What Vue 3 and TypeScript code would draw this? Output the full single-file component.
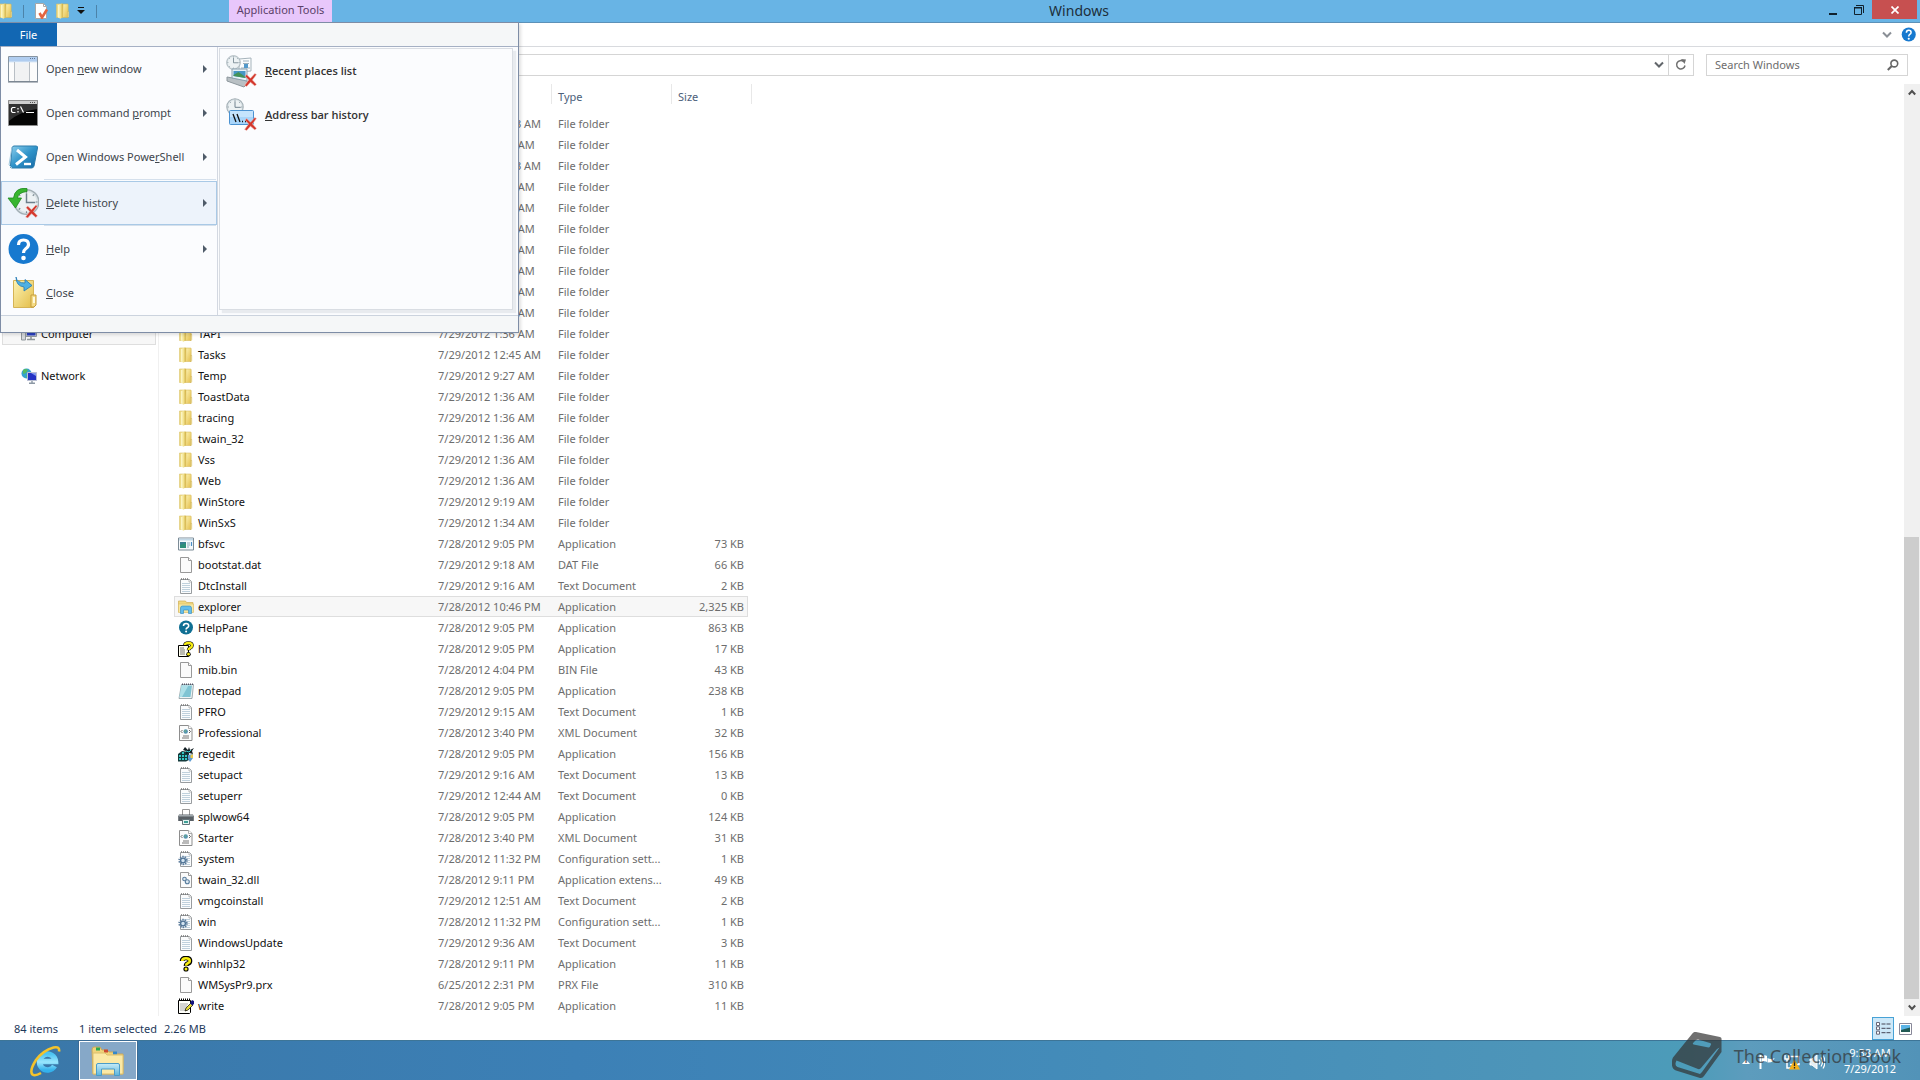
<script setup lang="ts">
import { ref } from 'vue'

interface FileRow {
  name: string
  date: string
  type: string
  size: string
  icon: string
}

function folder(name: string, date: string): FileRow {
  return { name, date, type: 'File folder', size: '', icon: 'folder' }
}

function file(name: string, date: string, type: string, size: string, icon: string): FileRow {
  return { name, date, type, size: size + ' KB', icon }
}

const rows: FileRow[] = [
  folder('', '7/29/2012 12:43 AM'),
  folder('', '7/29/2012 1:36 AM'),
  folder('', '7/29/2012 12:43 AM'),
  folder('', '7/29/2012 1:36 AM'),
  folder('', '7/29/2012 1:36 AM'),
  folder('', '7/29/2012 1:36 AM'),
  folder('', '7/29/2012 1:36 AM'),
  folder('', '7/29/2012 1:36 AM'),
  folder('', '7/29/2012 1:36 AM'),
  folder('', '7/29/2012 1:36 AM'),
  folder('TAPI', '7/29/2012 1:36 AM'),
  folder('Tasks', '7/29/2012 12:45 AM'),
  folder('Temp', '7/29/2012 9:27 AM'),
  folder('ToastData', '7/29/2012 1:36 AM'),
  folder('tracing', '7/29/2012 1:36 AM'),
  folder('twain_32', '7/29/2012 1:36 AM'),
  folder('Vss', '7/29/2012 1:36 AM'),
  folder('Web', '7/29/2012 1:36 AM'),
  folder('WinStore', '7/29/2012 9:19 AM'),
  folder('WinSxS', '7/29/2012 1:34 AM'),
  file('bfsvc', '7/28/2012 9:05 PM', 'Application', '73', 'program'),
  file('bootstat.dat', '7/29/2012 9:18 AM', 'DAT File', '66', 'blank'),
  file('DtcInstall', '7/29/2012 9:16 AM', 'Text Document', '2', 'text'),
  file('explorer', '7/28/2012 10:46 PM', 'Application', '2,325', 'explorer'),
  file('HelpPane', '7/28/2012 9:05 PM', 'Application', '863', 'helppane'),
  file('hh', '7/28/2012 9:05 PM', 'Application', '17', 'hh'),
  file('mib.bin', '7/28/2012 4:04 PM', 'BIN File', '43', 'blank'),
  file('notepad', '7/28/2012 9:05 PM', 'Application', '238', 'notepad'),
  file('PFRO', '7/29/2012 9:15 AM', 'Text Document', '1', 'text'),
  file('Professional', '7/28/2012 3:40 PM', 'XML Document', '32', 'xml'),
  file('regedit', '7/28/2012 9:05 PM', 'Application', '156', 'regedit'),
  file('setupact', '7/29/2012 9:16 AM', 'Text Document', '13', 'text'),
  file('setuperr', '7/29/2012 12:44 AM', 'Text Document', '0', 'text'),
  file('splwow64', '7/28/2012 9:05 PM', 'Application', '124', 'printer'),
  file('Starter', '7/28/2012 3:40 PM', 'XML Document', '31', 'xml'),
  file('system', '7/28/2012 11:32 PM', 'Configuration sett...', '1', 'config'),
  file('twain_32.dll', '7/28/2012 9:11 PM', 'Application extens...', '49', 'dll'),
  file('vmgcoinstall', '7/29/2012 12:51 AM', 'Text Document', '2', 'text'),
  file('win', '7/28/2012 11:32 PM', 'Configuration sett...', '1', 'config'),
  file('WindowsUpdate', '7/29/2012 9:36 AM', 'Text Document', '3', 'text'),
  file('winhlp32', '7/28/2012 9:11 PM', 'Application', '11', 'question'),
  file('WMSysPr9.prx', '6/25/2012 2:31 PM', 'PRX File', '310', 'blank'),
  file('write', '7/28/2012 9:05 PM', 'Application', '11', 'write'),
]

interface MenuItem {
  before: string
  key: string
  after: string
  icon: string
  arrow: boolean
  separated?: boolean
}

const menu: MenuItem[] = [
  { before: 'Open ', key: 'n', after: 'ew window', icon: 'm-window', arrow: true },
  { before: 'Open command ', key: 'p', after: 'rompt', icon: 'm-cmd', arrow: true },
  { before: 'Open Windows Powe', key: 'r', after: 'Shell', icon: 'm-ps', arrow: true },
  { before: '', key: 'D', after: 'elete history', icon: 'm-history', arrow: true, separated: true },
  { before: '', key: 'H', after: 'elp', icon: 'm-help', arrow: true, separated: true },
  { before: '', key: 'C', after: 'lose', icon: 'm-close', arrow: false },
]

const activeMenu = ref('m-history')
const selected = ref('explorer')
const search = ref('')
</script>

<template>
  <svg class="defs" aria-hidden="true">
    <defs>
      <linearGradient id="gold" x1="0" y1="0" x2="1" y2="1">
        <stop offset="0" stop-color="#fdf3b4" /><stop offset="1" stop-color="#e3bd48" />
      </linearGradient>
      <linearGradient id="leaf" x1="0" y1="0" x2="1" y2="0">
        <stop offset="0" stop-color="#fdf9cf" /><stop offset="0.5" stop-color="#f3e391" /><stop offset="1" stop-color="#cfae3f" />
      </linearGradient>
      <linearGradient id="psblue" x1="0" y1="0" x2="1" y2="1">
        <stop offset="0" stop-color="#8fd0ee" /><stop offset="0.5" stop-color="#2f93c9" /><stop offset="1" stop-color="#1668a4" />
      </linearGradient>
      <linearGradient id="ieblue" x1="0" y1="0" x2="0" y2="1">
        <stop offset="0" stop-color="#4cc4f2" /><stop offset="0.5" stop-color="#9ae6fd" /><stop offset="1" stop-color="#34b2ec" />
      </linearGradient>
      <linearGradient id="glass" x1="0" y1="0" x2="0" y2="1">
        <stop offset="0" stop-color="#c5ebf8" /><stop offset="1" stop-color="#5bb4dc" />
      </linearGradient>

      <symbol id="folder" viewBox="0 0 16 16">
        <path d="M1.500 1h6v13.500h-6z" fill="#eedb86" stroke="#dcc469" stroke-width=".6" />
        <path d="M3 2l4-1.500q1-.2 1 .8V14l-2.500 1.700L3 14.500z" fill="url(#leaf)" />
        <path d="M8 1h4.500q.7 0 .7.700V14.500H7.500z" fill="url(#gold)" stroke="#d3b24c" stroke-width=".5" />
        <path d="M12.500 8.500h1.200v5l-1.200 1.200z" fill="#fdf6c6" stroke="#c8a845" stroke-width=".5" />
      </symbol>
      <symbol id="blank" viewBox="0 0 16 16">
        <path d="M2.500.5h8l3 3v12h-11z" fill="#fbfbfb" stroke="#999" />
        <path d="M10.500.5v3h3" fill="#fff" stroke="#999" />
      </symbol>
      <symbol id="text" viewBox="0 0 16 16">
        <path d="M2.500 1.500h9l2 2v12h-11z" fill="#fbfcfd" stroke="#989c9f" />
        <path d="M3 1h8" stroke="#777" stroke-width="1.500" stroke-dasharray="1 1" />
        <path d="M11 1.500v2.500h2.500" fill="#fff" stroke="#aaa" stroke-width=".8" />
        <path d="M4 5.500h8M4 7.500h8M4 9.500h8M4 11.500h8M4 13.500h8" stroke="#b9ccd9" stroke-width=".9" />
      </symbol>
      <symbol id="program" viewBox="0 0 16 16">
        <path d="M.5 2h15v12H.5z" fill="#f6f9fb" stroke="#7c8b96" />
        <path d="M1 2.500h14v2H1z" fill="#c2d8e6" />
        <path d="M2 6h6v6H2z" fill="#397f91" /><path d="M2 9l6-2v5H2z" fill="#2d8f78" />
        <path d="M9 7h3M9 9h3M9 11h2" stroke="#8aaabb" /><path d="M13.500 6v4" stroke="#4b8fc7" stroke-width="1.200" />
      </symbol>
      <symbol id="explorer" viewBox="0 0 16 16">
        <path d="M.5 2h7l1 1.500H15V13H.5z" fill="#f2d980" stroke="#cfae55" stroke-width=".7" />
        <path d="M.5 5h15v8.500H.5z" fill="#f8e79f" stroke="#d5b75e" stroke-width=".5" />
        <path d="M2.500 14.500V9q0-2 2-2h7q2 0 2 2v5.500h-3V11h-5v3.500z" fill="#62bdec" stroke="#2b86bd" stroke-width=".6" />
      </symbol>
      <symbol id="helppane" viewBox="0 0 16 16">
        <circle cx="8" cy="7.500" r="7" fill="#0f6f93" />
        <path d="M5.500 6q0-2.500 2.600-2.500T10.700 6Q10.700 7 9.300 7.800 8.100 8.500 8.100 9.500" fill="none" stroke="#fff" stroke-width="1.600" />
        <circle cx="8.100" cy="11.500" r="1" fill="#fff" />
      </symbol>
      <symbol id="question" viewBox="0 0 16 16">
        <path d="M4 5Q4 2 8 2t4 3q0 1.800-2 2.500Q8 8.300 8 10" fill="none" stroke="#000" stroke-width="4.600" />
        <circle cx="8" cy="13" r="2.600" />
        <path d="M4.200 5Q4.200 2.200 8 2.200T11.800 5q0 1.600-2 2.300Q8 8.100 8 9.700" fill="none" stroke="#f6ec13" stroke-width="2.600" />
        <circle cx="8" cy="13" r="1.500" fill="#f6ec13" />
      </symbol>
      <symbol id="hh" viewBox="0 0 16 16">
        <path d="M.5 4.500h10v11H.5z" fill="#fffff0" stroke="#000" />
        <path d="M2 7h4M2 9h5M2 11h5M2 13h5" stroke="#777" />
        <path d="M7 4Q7 2 10.500 2T14 4.500Q14 6 12 7q-1.500.8-1.500 2.200" fill="none" stroke="#000" stroke-width="3.600" />
        <circle cx="10.500" cy="13.200" r="2.200" />
        <path d="M7 4Q7 2 10.500 2T14 4.500Q14 6 12 7q-1.500.8-1.500 2" fill="none" stroke="#f6ec13" stroke-width="2.400" />
        <circle cx="10.500" cy="13.200" r="1.400" fill="#f6ec13" />
      </symbol>
      <symbol id="notepad" viewBox="0 0 16 16">
        <path d="M3.500 1.500h12L14 15.500H1z" fill="#eef3f4" stroke="#8a9aa0" stroke-width=".8" />
        <path d="M3.500 2.500h10.500L12.500 14H1.500z" fill="#7fc4d3" /><path d="M3.500 2.500h7L4 14H1.500z" fill="#aee0e8" />
        <path d="M4 1.300h11" stroke="#556" stroke-width="1.600" stroke-dasharray="1 1" />
      </symbol>
      <symbol id="xml" viewBox="0 0 16 16">
        <path d="M1.500.5h9l3.500 3v12H1.500z" fill="#fcfcfc" stroke="#8d8d8d" />
        <path d="M10.500.5v3H14" fill="#fff" stroke="#999" stroke-width=".8" />
        <circle cx="7.700" cy="6.500" r="2.200" fill="#5794b0" /><circle cx="7.300" cy="6" r=".8" fill="#72b778" />
        <path d="M4.500 5L3 6.500 4.500 8M11 5l1.500 1.500L11 8" fill="none" stroke="#555" stroke-width=".9" />
        <path d="M5 11h6M4 13h7" stroke="#777" />
      </symbol>
      <symbol id="regedit" viewBox="0 0 16 16">
        <path d="M0 8l4-3 7 1v8l-3 1.500H0z" fill="#153b3c" />
        <path d="M1 9h2v2H1zM4 9h2v2H4zM7 9h2v2H7zM1 12h2v2H1zM4 12h2v2H4zM7 12h2v2H7zM4 6h2v2H4z" fill="#35c7c4" />
        <path d="M7 1l3 3 1-3 1 3 4-2-2 3 1 3-4-1-3 1V5L5 4z" fill="#111d22" /><path d="M8 5l3 1 2-2" stroke="#3cc" fill="none" />
        <path d="M10 9l5-1v4l-3 4-2-3z" fill="#5e9bd0" /><path d="M12.500 9l2.500-.8v3.800h-2.500z" fill="#e6c84e" />
      </symbol>
      <symbol id="printer" viewBox="0 0 16 16">
        <path d="M4.500.5h7V7h-7z" fill="#fff" stroke="#999" />
        <path d="M1 5.500h14l.8 2V12H.2V7.500z" fill="#596066" /><path d="M1 6h14v1.500H1z" fill="#a1a8ad" />
        <path d="M4.500 10.500h7v5h-7z" fill="#e4f3f0" stroke="#64747a" /><path d="M6 12h4v2H6z" fill="#3f9f96" />
      </symbol>
      <symbol id="gear" viewBox="0 0 16 16">
        <circle cx="5" cy="9.500" r="3.800" fill="none" stroke="#5c7c9c" stroke-width="1.800" stroke-dasharray="1.300 1.100" />
        <circle cx="5" cy="9.500" r="2.400" fill="#d4e4f1" stroke="#4f7396" stroke-width="1.300" />
      </symbol>
      <symbol id="config" viewBox="0 0 16 16">
        <use href="#text" width="16" height="16" /><use href="#gear" width="16" height="16" />
      </symbol>
      <symbol id="dll" viewBox="0 0 16 16">
        <use href="#blank" width="16" height="16" />
        <circle cx="6.500" cy="7" r="1.800" fill="#dde9f2" stroke="#5a7e9e" stroke-width="1.100" />
        <circle cx="9.300" cy="9.800" r="2" fill="#dde9f2" stroke="#5a7e9e" stroke-width="1.100" />
      </symbol>
      <symbol id="write" viewBox="0 0 16 16">
        <path d="M.5 2.500h12v12l-1 1H.5z" fill="#fffffa" stroke="#000" />
        <path d="M1 1.500h12" stroke="#000" stroke-width="2" stroke-dasharray="1 1" />
        <path d="M2 6h8M2 8h7M2 10h6M2 12h7" stroke="#aaa" />
        <path d="M7 13l1-3 5-5 2 2-5 5z" fill="#e8dc3a" stroke="#000" stroke-width=".7" />
        <path d="M12 5l2-3 2 1v3l-2 1.500z" fill="#14147e" />
      </symbol>

      <symbol id="redx" viewBox="0 0 12 12">
        <path d="M1 2.500L2.500 1 6 4.300 10 0l1.500 1L7.800 6l3.700 4-1.500 1.500L6 8l-3.500 4L.5 11 4.300 6z" fill="#d3372c" stroke="#f4c9c2" stroke-width=".5" />
      </symbol>
      <symbol id="clock" viewBox="0 0 28 28">
        <circle cx="14" cy="14" r="12.800" fill="#dbe3e7" stroke="#a3afb5" stroke-width="1.600" />
        <circle cx="14" cy="14" r="10.500" fill="#edf2f4" />
        <path d="M14 5v9.500h9" fill="none" stroke="#6d7f8b" stroke-width="1.500" />
        <path d="M14 2.500v2M14 23.500v2M2.500 14h2M23.500 14h2M6 6l1.500 1.500M22 6l-1.500 1.500M6 22l1.500-1.500" stroke="#7b8b94" stroke-width="1.200" />
      </symbol>
      <symbol id="m-window" viewBox="0 0 32 32">
        <path d="M1.500 3.500h29v25h-29z" fill="#fcfcfc" stroke="#8794a1" />
        <path d="M2 4h28v5H2z" fill="#b0cdf0" /><path d="M23 5.500h6" stroke="#5d7697" stroke-dasharray="1 1" />
        <path d="M2 9h28" stroke="#dce9f7" /><path d="M7.500 9v19M22.500 9v19" stroke="#b9bfc5" />
        <path d="M8 10h14v18H8z" fill="#f1f2f3" /><path d="M1 29h30" stroke="#717b85" />
      </symbol>
      <symbol id="m-cmd" viewBox="0 0 32 32">
        <path d="M1.500 3.500h29v25h-29z" fill="#050505" stroke="#8d8d8d" />
        <path d="M2 4h28v3H2z" fill="#cdcdcd" /><path d="M23 5.500h6" stroke="#555" stroke-dasharray="1 1" />
        <path d="M2 7h28v5Q14 14 2 24z" fill="#555" opacity=".55" />
        <path d="M8.500 10.500h-3l-1 1v3l1 1h3M11 11v1.500M11 14v1.500M13.500 9.500l3 6M19 15.500h8" stroke="#fff" stroke-width="1.200" fill="none" />
      </symbol>
      <symbol id="m-ps" viewBox="0 0 32 32">
        <path d="M7 5h22q2 0 1.500 2L27 25q-.5 2-2.500 2H5q-2 0-1.500-2L5 7q.5-2 2-2z" fill="url(#psblue)" stroke="#2b7cac" />
        <path d="M5 6L2 24l3 3" stroke="#9fc7dd" fill="none" />
        <path d="M10 9l8.500 7L9 23.500" stroke="#fff" stroke-width="3" fill="none" /><path d="M17 23h7" stroke="#fff" stroke-width="2.400" />
      </symbol>
      <symbol id="m-history" viewBox="0 0 32 32">
        <use href="#clock" x="6" y="1" width="27" height="28" />
        <path d="M20 1.500Q8 0 6.500 11H1l7.500 10 6-10h-4Q11 5.500 20 4.500z" fill="#38b52f" stroke="#1f8a20" stroke-width=".8" />
        <use href="#redx" x="18" y="18" width="13" height="13" />
      </symbol>
      <symbol id="m-help" viewBox="0 0 32 32">
        <circle cx="16.500" cy="16" r="15" fill="#1779cf" />
        <path d="M11.500 12q0-5 5-5t5 4.500q0 2.300-2.800 4.200-2.200 1.600-2.200 4.300" fill="none" stroke="#fff" stroke-width="3.200" />
        <circle cx="16.500" cy="25" r="2.300" fill="#fff" />
      </symbol>
      <symbol id="m-close" viewBox="0 0 32 32">
        <path d="M6.500 3.500h20v27h-20z" fill="url(#gold)" stroke="#d5b355" />
        <path d="M24 18h5v10l-2 2h-3z" fill="#f5dc85" stroke="#c59c3c" /><path d="M26 20h2v6h-2z" fill="#fff9dc" />
        <path d="M9 0q1 6 9 6V2.500L25 8.500 17 14v-4Q9 9 9 0z" fill="#4fb0e3" stroke="#2379b2" stroke-width=".8" />
      </symbol>
      <symbol id="s-recent" viewBox="0 0 32 34">
        <path d="M13 5l12-1v13l-12 1z" fill="#fafcfd" stroke="#a6b3bb" />
        <path d="M17 7h6M17 9.500h6M15 14h9" stroke="#9db0bc" /><path d="M18 10h4v4h-4z" fill="#5399ca" />
        <use href="#clock" x="0" y="1" width="15" height="15" />
        <path d="M1 23l17 3 5 2-5 5-17-6z" fill="#b9c0c4" stroke="#8d979d" />
        <path d="M6 15h15v12L6 24z" fill="#e6f1f7" stroke="#8ba1ae" /><path d="M7.500 17h12v7l-12-2z" fill="#4696c5" /><path d="M7.500 21l5-3 7 5v1l-12-2z" fill="#439257" />
        <use href="#redx" x="18" y="19" width="13" height="14" />
      </symbol>
      <symbol id="s-address" viewBox="0 0 32 34">
        <use href="#clock" x="0" y="0" width="18" height="18" />
        <rect x="3.500" y="12.500" width="24" height="14" rx="1" fill="#a8d5fa" stroke="#4b92d1" />
        <path d="M4 13h23v6H4z" fill="#d1eafd" opacity=".7" />
        <path d="M7 16l3 8M11 16l3 8M16 23.500h1M19 23.500h1" stroke="#111" stroke-width="1.300" />
        <use href="#redx" x="18" y="19" width="13" height="14" />
      </symbol>
    </defs>
  </svg>

  <div class="screen">
    <header class="titlebar">
      <div class="quick">
        <svg class="q-icon q-first" viewBox="0 0 16 16"><use href="#folder" /></svg>
        <i class="q-sep"></i>
        <button class="q-button" aria-label="Properties">
          <svg class="q-icon" viewBox="0 0 16 16">
            <path d="M2.500.5h8l3 3v12h-11z" fill="#fff" stroke="#a7a7a7" /><path d="M10.500.5v3h3" fill="none" stroke="#aaa" />
            <path d="M6.500 10l2.500 4.500 5-8" fill="none" stroke="#e4643f" stroke-width="2.600" />
          </svg>
        </button>
        <button class="q-button" aria-label="New folder"><svg class="q-icon" viewBox="0 0 16 16"><use href="#folder" /></svg></button>
        <button class="q-drop" aria-label="Customize Quick Access Toolbar">
          <svg width="8" height="8" viewBox="0 0 8 8"><path d="M1 .5h6" stroke="#111" /><path d="M0 3h8L4 7z" fill="#111" /></svg>
        </button>
        <i class="q-sep"></i>
      </div>
      <div class="tools-tab">Application Tools</div>
      <h1 class="title">Windows</h1>
      <div class="controls">
        <button aria-label="Minimize"><svg width="10" height="12" viewBox="0 0 10 12"><path d="M1 10h8" stroke="#10212d" stroke-width="2" /></svg></button>
        <button aria-label="Restore">
          <svg width="10" height="12" viewBox="0 0 10 12" fill="none" stroke="#10212d"><path d="M.5 4h7v6.500h-7z" /><path d="M0 3.500h8" /><path d="M2 1.500h7.500V9" /></svg>
        </button>
        <button class="close" aria-label="Close"><svg width="8" height="8" viewBox="0 0 8 8"><path d="M.5.5l7 7M7.500.5l-7 7" stroke="#fff" stroke-width="1.700" /></svg></button>
      </div>
    </header>

    <div class="ribbon">
      <button aria-label="Expand the Ribbon"><svg width="10" height="8" viewBox="0 0 10 8"><path d="M1 1.500l4 4 4-4" fill="none" stroke="#8a8f96" stroke-width="2" /></svg></button>
      <button aria-label="Help"><svg width="15" height="15" viewBox="0 0 32 32"><use href="#m-help" /></svg></button>
    </div>

    <div class="address-row">
      <div class="address">
        <button aria-label="Previous Locations"><svg width="10" height="8" viewBox="0 0 10 8"><path d="M1 1.500l4 4 4-4" fill="none" stroke="#62666b" stroke-width="2" /></svg></button>
        <button class="refresh" aria-label="Refresh">
          <svg width="12" height="12" viewBox="0 0 12 12"><path d="M8.500 2.500A4.200 4.200 0 1 0 10 6.500" fill="none" stroke="#707070" stroke-width="1.500" /><path d="M6 0l5 .5-1.500 4.500z" fill="#707070" /></svg>
        </button>
      </div>
      <label class="search">
        <input v-model="search" type="text" placeholder="Search Windows" aria-label="Search Windows" />
        <svg width="12" height="12" viewBox="0 0 12 12"><circle cx="7.300" cy="4.500" r="3.400" fill="none" stroke="#666" stroke-width="1.600" /><path d="M4.800 7L.8 11" stroke="#666" stroke-width="2" /></svg>
      </label>
    </div>

    <div class="content">
      <nav class="sidebar" aria-label="Navigation">
        <a href="#computer" class="place current">
          <svg width="16" height="16" viewBox="0 0 16 16">
            <path d="M.5 3h4v11h-4z" fill="#d4d8db" stroke="#8f979c" /><path d="M5 2.500h10.500v8H5z" fill="#d9dde0" stroke="#90979d" />
            <path d="M6 3.500h8.500v6H6z" fill="#2a3fc0" /><path d="M9 3.500h5.500v3z" fill="#8fa6ec" /><path d="M6 13.500h8M10 11v2" stroke="#8f979c" stroke-width="1.600" />
          </svg>
          Computer
        </a>
        <a href="#network" class="place">
          <svg width="16" height="16" viewBox="0 0 16 16">
            <circle cx="5.500" cy="5.500" r="5" fill="#33a2cf" /><path d="M2 2q3-2 5 0L5 5l-3 1zM5 7l3 1-2 2.500z" fill="#55bb62" />
            <path d="M6.500 4.500h9v8h-9z" fill="#2433c4" stroke="#b9bfd2" /><path d="M10 5h5v3z" fill="#8299ef" /><path d="M8 15.300h6M11 13v2" stroke="#8c98a4" stroke-width="1.400" />
          </svg>
          Network
        </a>
      </nav>

      <main class="files">
        <table>
          <colgroup><col class="c-name" /><col class="c-date" /><col class="c-type" /><col class="c-size" /></colgroup>
          <thead>
            <tr>
              <th scope="col"><span aria-label="Name"></span></th>
              <th scope="col"><span aria-label="Date modified"></span></th>
              <th scope="col"><span>Type</span></th>
              <th scope="col"><span>Size</span></th>
            </tr>
          </thead>
          <tbody>
            <tr v-for="(row, i) in rows" :key="i" :class="{ chosen: row.name === selected }" @click="selected = row.name">
              <td class="name"><div><svg width="16" height="16" viewBox="0 0 16 16"><use :href="'#' + row.icon" /></svg>{{ row.name }}</div></td>
              <td>{{ row.date }}</td>
              <td>{{ row.type }}</td>
              <td class="size">{{ row.size }}</td>
            </tr>
          </tbody>
        </table>
      </main>

      <div class="scrollbar">
        <button aria-label="Scroll up"><svg width="8" height="7" viewBox="0 0 8 7"><path d="M.8 5.500L4 2l3.200 3.500" fill="none" stroke="#505050" stroke-width="2" /></svg></button>
        <div class="track"><div class="thumb"></div></div>
        <button aria-label="Scroll down"><svg width="8" height="7" viewBox="0 0 8 7"><path d="M.8 1.500L4 5l3.200-3.500" fill="none" stroke="#505050" stroke-width="2" /></svg></button>
      </div>
    </div>

    <footer class="status">
      <span class="count">84 items</span>
      <span>1 item selected</span>
      <span class="bytes">2.26 MB</span>
      <div class="views">
        <button class="on" aria-label="Details">
          <svg width="15" height="13" viewBox="0 0 15 13"><path d="M.5.5h3v3h-3zM.5 4.800h3v3h-3zM.5 9.200h3v3h-3z" fill="#fff" stroke="#667" /><path d="M5.500 2h4M10.500 2h4M5.500 6.300h4M10.500 6.300h4M5.500 10.700h4M10.500 10.700h4" stroke="#445" /></svg>
        </button>
        <button aria-label="Large icons">
          <svg width="13" height="12" viewBox="0 0 13 12"><path d="M.5.5h12v11H.5z" fill="#fff" stroke="#889" /><path d="M2 2h9v7H2z" fill="#5bb4e6" /><path d="M2 7l9-2.500V9H2z" fill="#215a54" /></svg>
        </button>
      </div>
    </footer>

    <div class="taskbar">
      <button class="task" aria-label="Internet Explorer">
        <svg width="32" height="32" viewBox="0 0 32 32">
          <path d="M24.500 21A8 8 0 1 1 25.500 16.500H11" fill="none" stroke="url(#ieblue)" stroke-width="5.500" />
          <path d="M29 6.500Q30 1 23.500 2.500 13 5.500 6 15 -1 26 2.500 29.500 5 31.500 11 28" fill="none" stroke="#f4c32c" stroke-width="2.600" />
        </svg>
      </button>
      <button class="task open" aria-label="File Explorer">
        <svg width="34" height="32" viewBox="0 0 34 32">
          <path d="M1 5q0-3 2-3h6l2 3h5l2 2h6l2 2h6v20H2z" fill="#f0d37a" stroke="#c9a75a" />
          <path d="M5 2.500h4v3H5z" fill="#2ba84f" /><path d="M13 4.500h4v3h-4z" fill="#cc4a31" /><path d="M22 6.500h4v3h-4z" fill="#3488cb" />
          <path d="M2 8h12l2 2h16v19H2z" fill="#fbe9a6" stroke="#dcbf6c" />
          <path d="M5.500 30.500V20q0-1.500 1.500-1.500h20q1.500 0 1.500 1.500v10.500h-5V24h-13v6.500z" fill="url(#glass)" stroke="#4a9cc8" />
        </svg>
      </button>
      <div class="tray">
        <svg width="8" height="5" viewBox="0 0 8 5"><path d="M0 5l4-4.500L8 5z" fill="#fff" /></svg>
        <svg width="16" height="16" viewBox="0 0 16 16"><path d="M1.500 1v14" stroke="#fff" stroke-width="2" /><path d="M3 2q3-1.500 5 0v6Q6 6.500 3 8zM8.500 4q3 2 7 0-1 5-7 4.500z" fill="#fff" /></svg>
        <svg width="16" height="16" viewBox="0 0 16 16"><path d="M4 2.500h11v8H6M1 1v4h4V1M3 5v9h5" fill="none" stroke="#fff" stroke-width="1.500" /><path d="M10.500 5.500L16 15.500H5z" fill="#f5b11b" /><path d="M10.500 8.500v3.500M10.500 13v1.500" stroke="#222" stroke-width="1.300" /></svg>
        <svg width="16" height="16" viewBox="0 0 16 16"><path d="M1 5h2l5-4v14l-5-4H1z" fill="#e6eef2" stroke="#fff" /><path d="M10 5.500q1.500 2.500 0 5M12 3.500q3 4.500 0 9M14 1.500q4 6.500 0 13" fill="none" stroke="#fff" stroke-width="1.200" /></svg>
      </div>
      <div class="clock"><span>9:38 AM</span><span>7/29/2012</span></div>
    </div>

    <div class="watermark">
      <svg width="50" height="47" viewBox="0 0 50 47">
        <path
          fill="currentColor"
          fill-rule="evenodd"
          d="M24 0l24 5q2 .5 1.500 3v12L32 44q-1.500 2.500-4 2L4 38.500Q-1 36.500 0 29q0-2 1-3.500L20 2q1.500-2.500 4-2zM24 8l-3 3q-.5 1 .5 1.500l15 3q1 0 1.500-1l1-2q.5-1-1-1.500l-12-3.500zM4.500 28.500q-2.500 5 1 6.500L28 42l2-2 17.500-24.500L45 17 29 36q-1 1.500-3 1z"
        />
      </svg>
      <span>The Collection Book</span>
    </div>

    <section class="filemenu" aria-label="File menu">
      <div class="tabs"><button class="file-tab">File</button></div>
      <div class="menu-body">
        <div class="menu-list">
          <button
            v-for="item in menu"
            :key="item.icon"
            class="menu-item"
            :class="{ active: item.icon === activeMenu, separated: item.separated }"
            @mouseenter="activeMenu = item.icon"
          >
            <svg width="32" height="32" viewBox="0 0 32 32"><use :href="'#' + item.icon" /></svg>
            <span>{{ item.before }}<u>{{ item.key }}</u>{{ item.after }}</span>
            <svg v-if="item.arrow" class="arrow" width="4" height="8" viewBox="0 0 4 8"><path d="M0 0l4 4-4 4z" fill="#4f5b69" /></svg>
          </button>
        </div>
        <div class="submenu">
          <button class="sub-item"><svg width="32" height="34" viewBox="0 0 32 34"><use href="#s-recent" /></svg><span><u>R</u>ecent places list</span></button>
          <button class="sub-item"><svg width="32" height="34" viewBox="0 0 32 34"><use href="#s-address" /></svg><span><u>A</u>ddress bar history</span></button>
        </div>
      </div>
      <div class="menu-foot"></div>
    </section>
  </div>
</template>

<style>
body {
  margin: 0;
}
</style>

<style scoped>
.defs {
  position: absolute;
  width: 0;
  height: 0;
}
.screen {
  position: relative;
  display: flex;
  flex-direction: column;
  min-height: 100vh;
  overflow: hidden;
  background: #fff;
  color: #6d6d6d;
  font: 11px/16px "Noto Sans", "Open Sans", sans-serif;
}
.screen * {
  box-sizing: border-box;
}
button,
input {
  margin: 0;
  padding: 0;
  border: 0;
  background: none;
  color: inherit;
  font: inherit;
}
button {
  display: flex;
  align-items: center;
  justify-content: center;
}
svg {
  flex: none;
  display: block;
}
.titlebar {
  display: flex;
  align-items: flex-start;
  height: 23px;
  background: #68b4e5;
  border-bottom: 1px solid #5c91b8;
}
.quick {
  display: flex;
  align-items: center;
  width: 229px;
  height: 22px;
}
.q-icon {
  width: 16px;
  height: 16px;
}
.q-first {
  margin-left: -2px;
}
.q-sep {
  width: 1px;
  height: 13px;
  margin: 0 6px 0 9px;
  background: #4c83a9;
}
.q-button {
  width: 22px;
  height: 22px;
}
.q-drop {
  width: 13px;
  height: 22px;
}
.tools-tab {
  width: 103px;
  height: 22px;
  background: #e8c7fb;
  color: #5a4068;
  line-height: 20px;
  text-align: center;
}
.title {
  flex: 1;
  margin: 0;
  padding-left: 6px;
  color: #1d2f3b;
  font-size: 14px;
  font-weight: 400;
  line-height: 22px;
  text-align: center;
}
.controls {
  display: flex;
  padding-right: 3px;
}
.controls button {
  width: 26px;
  height: 19px;
}
.controls .close {
  width: 45px;
  background: #c75050;
}
.ribbon {
  display: flex;
  justify-content: flex-end;
  align-items: center;
  gap: 9px;
  height: 24px;
  padding-right: 4px;
  border-bottom: 1px solid #d8dade;
}
.address-row {
  display: flex;
  gap: 12px;
  height: 37px;
  padding: 7px 12px 8px 160px;
}
.address {
  display: flex;
  flex: 1;
  justify-content: flex-end;
  border: 1px solid #d5d5d5;
}
.address button {
  width: 18px;
}
.address .refresh {
  width: 25px;
  border-left: 1px solid #d5d5d5;
}
.search {
  display: flex;
  align-items: center;
  width: 202px;
  padding: 0 8px;
  border: 1px solid #d5d5d5;
}
.search input {
  flex: 1;
  min-width: 0;
  outline: 0;
}
.search input::placeholder {
  color: #6d6d6d;
  opacity: 1;
}
.content {
  display: flex;
  flex: 1;
}
.sidebar {
  width: 159px;
  padding: 239px 2px 0;
  border-right: 1px solid #f0f0f0;
}
.place {
  display: flex;
  align-items: center;
  gap: 4px;
  height: 22px;
  margin-bottom: 20px;
  padding-left: 18px;
  border: 1px solid transparent;
  color: #111;
  text-decoration: none;
}
.place.current {
  background: #f7f7f7;
  border-color: #dedede;
}
.files {
  flex: 1;
  padding-left: 15px;
}
table {
  width: 574px;
  table-layout: fixed;
  border-collapse: collapse;
}
.c-name {
  width: 264px;
}
.c-date {
  width: 120px;
}
.c-type {
  width: 120px;
}
.c-size {
  width: 70px;
}
th {
  height: 29px;
  padding: 0;
  color: #4c607a;
  font-weight: 400;
  text-align: left;
  vertical-align: top;
}
th span {
  display: block;
  height: 20px;
  margin-left: -7px;
  padding: 5px 0 0 6px;
  border-left: 1px solid #e8e8e8;
}
th:first-child span,
th:nth-child(2) span {
  border-color: transparent;
}
th:last-child span {
  width: 81px;
  border-right: 1px solid #e8e8e8;
}
td {
  height: 21px;
  padding: 0;
  white-space: nowrap;
}
.name {
  color: #111;
}
.name div {
  display: flex;
  align-items: center;
  gap: 4px;
  padding-left: 4px;
}
.size {
  padding-right: 4px;
  text-align: right;
}
.chosen {
  background: #f7f7f7;
  outline: 1px solid #dedede;
  outline-offset: -1px;
}
.scrollbar {
  display: flex;
  flex-direction: column;
  width: 16px;
  background: #f0f0f0;
}
.scrollbar button {
  height: 17px;
}
.track {
  display: flex;
  flex: 1;
  align-items: flex-end;
}
.thumb {
  width: 15px;
  height: 51.4%;
  background: #cdcdcd;
}
.status {
  display: flex;
  align-items: center;
  height: 24px;
  padding: 1px 0 0 14px;
  color: #1e395b;
}
.count {
  width: 65px;
}
.bytes {
  margin-left: 7px;
}
.views {
  display: flex;
  margin-left: auto;
  padding-right: 4px;
}
.views button {
  width: 22px;
  height: 23px;
}
.views .on {
  background: #cde8f8;
  border: 1px solid #47a2d6;
}
.taskbar {
  display: flex;
  height: 40px;
  background: linear-gradient(90deg, #3a77a8 0, #3c80b6 30%, #438bb9 55%, #4d95b9 80%, #4c9cb9 88%, #5d9cbd 91%, #5293b8 100%);
  border-top: 1px solid #3d7597;
  color: #fff;
}
.task {
  width: 58px;
  height: 39px;
  margin-left: 17px;
}
.task.open {
  margin-left: 4px;
  background: #86a8c8;
  border: 1px solid #fff;
  outline: 1px solid #3b6b94;
  outline-offset: 0;
}
.tray {
  display: flex;
  align-items: center;
  gap: 9px;
  margin-left: auto;
  padding-top: 2px;
}
.clock {
  display: flex;
  flex-direction: column;
  align-items: center;
  width: 90px;
  margin-right: 5px;
  padding-top: 4px;
}
.watermark {
  position: absolute;
  right: 19px;
  bottom: 1px;
  display: flex;
  align-items: center;
  gap: 12px;
  color: #333;
  font-size: 18px;
  opacity: 0.7;
}
.watermark span {
  line-height: 24px;
}
.filemenu {
  position: absolute;
  top: 22px;
  left: 0;
  width: 519px;
  border: 1px solid #7e8da6;
  background: #fbfcfe;
  box-shadow: 2px 2px 3px rgba(0, 0, 0, 0.12);
  color: #40454c;
}
.tabs {
  height: 24px;
  background: #f5f7f8;
  border-bottom: 1px solid #a5b0c4;
}
.file-tab {
  width: 57px;
  height: 23px;
  margin-left: -1px;
  background: #1267b3;
  color: #fff;
}
.menu-body {
  display: flex;
}
.menu-list {
  width: 217px;
  border-right: 1px solid #d3d8e1;
}
.menu-item {
  position: relative;
  justify-content: flex-start;
  gap: 7px;
  width: 100%;
  height: 44px;
  padding-left: 5px;
  border: 1px solid transparent;
}
.menu-item.separated {
  margin-top: 2px;
}
.menu-item.separated::before {
  content: "";
  position: absolute;
  top: -3px;
  left: 42px;
  right: 0;
  height: 1px;
  background: #d5e0ec;
}
.menu-item.active {
  background: #edf3fb;
  border-color: #a9c9e6;
}
.arrow {
  margin-left: auto;
  margin-right: 9px;
}
.submenu {
  flex: 1;
  margin: 1px 5px 5px 1px;
  border: 1px solid #d9dde3;
  box-shadow: 3px 3px 1px #e8ebef;
}
.sub-item {
  justify-content: flex-start;
  gap: 7px;
  width: 100%;
  height: 44px;
  padding-left: 6px;
  color: #333;
  font-family: "Open Sans", "Noto Sans", sans-serif;
  font-weight: 600;
}
.menu-foot {
  height: 17px;
  background: #f5f7f8;
  border-top: 1px solid #cbd3de;
}
</style>
